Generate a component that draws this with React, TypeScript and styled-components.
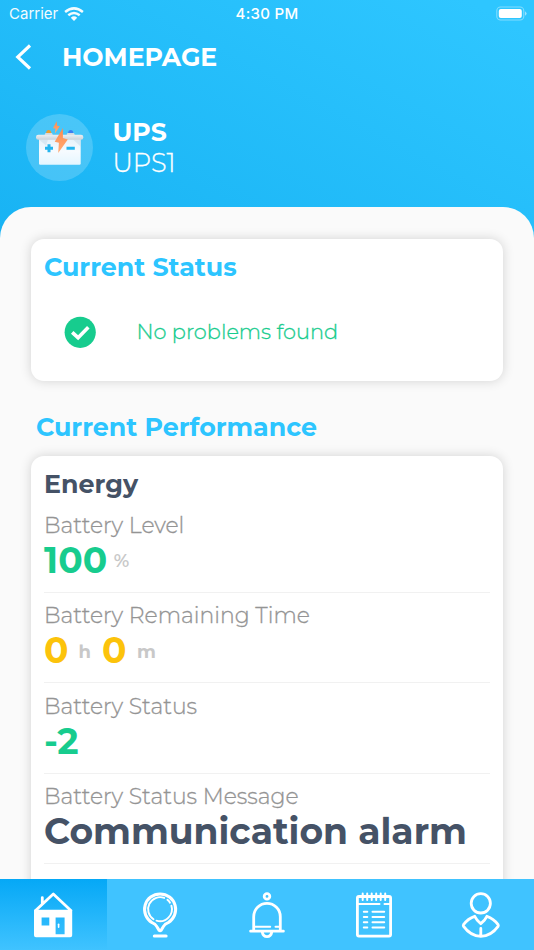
import React from 'react';
import styled, { createGlobalStyle } from 'styled-components';

const GlobalStyle = createGlobalStyle`
  * { box-sizing: border-box; }
  body { margin: 0; }
`;

const Screen = styled.div`
  display: flex;
  flex-direction: column;
  height: 950px;
  overflow: hidden;
  font-family: Montserrat, Inter, sans-serif;
  white-space: nowrap;
  background: linear-gradient(28deg, #17b2f3 0, #2ec6ff 450px) 0 0 / 100% 260px no-repeat;
`;

const StatusBar = styled.div`
  display: grid;
  grid-template-columns: 1fr auto 1fr;
  align-items: center;
  height: 27px;
  flex: none;
  padding: 0 7px 0 9px;
  color: #fff;
  font-family: Inter, sans-serif;
  font-size: 15px;
`;

const Carrier = styled.div`
  display: flex;
  align-items: center;
  gap: 6px;
  opacity: 0.95;
`;

const Clock = styled.div`
  font-weight: 500;
  letter-spacing: 0.3px;
  padding-right: 2px;
`;

const BatteryIcon = styled.svg`
  justify-self: end;
`;

const TitleBar = styled.header`
  display: flex;
  align-items: center;
  height: 60px;
  flex: none;
  padding-left: 14px;
  gap: 28px;
  color: #fff;
`;

const PageTitle = styled.h1`
  margin: 0;
  padding-bottom: 1px;
  font-size: 25.2px;
  line-height: 30px;
  font-weight: 700;
`;

const Device = styled.section`
  display: flex;
  align-items: center;
  flex: none;
  gap: 19.5px;
  height: 120px;
  padding: 27px 26px 26px;
  color: #fff;
`;

const DeviceText = styled.div<{ $bold?: boolean }>`
  font-size: ${p => (p.$bold ? 25.2 : 25.6)}px;
  line-height: ${p => (p.$bold ? 30 : 32)}px;
  font-weight: ${p => (p.$bold ? 700 : 300)};
  -webkit-text-stroke: ${p => (p.$bold ? 0 : 0.3)}px;
`;

const Sheet = styled.main`
  flex: 1;
  min-height: 0;
  overflow: hidden;
  padding: 32px 31px 0;
  border-radius: 31px 31px 0 0;
  background: #fafafa;
`;

const Card = styled.section<{ $height: number }>`
  height: ${p => p.$height}px;
  padding: 13px 13px 0;
  border-radius: 13px;
  background: #fff;
  box-shadow: 0 0 12px rgba(0, 0, 0, 0.16);
`;

const Heading = styled.h2<{ $dark?: boolean }>`
  margin: 0;
  font-size: 25.3px;
  line-height: 30px;
  font-weight: 700;
  color: ${p => (p.$dark ? '#455266' : '#2dc5ff')};
`;

const SectionHeader = styled.div`
  padding: 31px 0 14px 5px;
`;

const StatusRow = styled.div`
  display: flex;
  align-items: center;
  height: 60px;
  margin-top: 20px;
  padding-left: 20px;
  gap: 39.5px;
`;

const StatusText = styled.div`
  padding-bottom: 2px;
  color: #17cc8e;
  font-size: 20.9px;
  font-weight: 300;
  -webkit-text-stroke: 0.3px;
`;

const Metrics = styled.div`
  padding-top: 3.6px;
`;

const Metric = styled.div`
  padding: 9.4px 0 10.93px;
  border-bottom: 1px solid #f1f1f1;
`;

const MetricLabel = styled.div`
  height: 27px;
  color: #949494;
  font-size: 21.95px;
  line-height: 28px;
  font-weight: 300;
  -webkit-text-stroke: 0.3px;
`;

const MetricValue = styled.div`
  display: flex;
  align-items: center;
  height: 42px;
`;

const Figure = styled.span<{ $color: string }>`
  color: ${p => p.$color};
  font-size: 36.1px;
  line-height: 42px;
  font-weight: 700;
`;

const Unit = styled.span<{ $bold?: boolean; $before: number; $after?: number }>`
  padding: 3px ${p => p.$after ?? 0}px 0 ${p => p.$before}px;
  color: #c8c8c8;
  font-size: 18px;
  font-weight: ${p => (p.$bold ? 700 : 600)};
`;

const TabBar = styled.nav`
  display: grid;
  grid-template-columns: repeat(5, 1fr);
  flex: none;
  height: 71px;
  background: #40c3ff;
`;

const Tab = styled.a<{ $active?: boolean }>`
  display: flex;
  align-items: center;
  justify-content: center;
  background: ${p => (p.$active ? 'linear-gradient(#05a8f6, #40c3ff)' : 'none')};
`;

const TabIcon = styled.svg.attrs({ width: 40, height: 46, viewBox: '0 0 40 46' })`
  fill: none;
  stroke: #fff;
  stroke-width: 2.8;
  stroke-linecap: round;
  stroke-linejoin: round;
`;

const DeviceArt = () => (
  <svg width="67" height="67" viewBox="0 0 67 67">
    <defs>
      <linearGradient id="caseFill" x2="0" y2="1">
        <stop stopColor="#e5f1fa" />
        <stop offset="0.5" stopColor="#f6fbff" />
        <stop offset="1" stopColor="#e5f6ff" />
      </linearGradient>
      <linearGradient id="lidFill" x2="0" y2="1">
        <stop stopColor="#eceff2" />
        <stop offset="1" stopColor="#cbd3da" />
      </linearGradient>
      <linearGradient id="boltFill" x2="0" y2="1">
        <stop stopColor="#ff8a4c" />
        <stop offset="1" stopColor="#ffad78" />
      </linearGradient>
    </defs>
    <circle cx="33.5" cy="33.5" r="33.5" fill="#fff" fillOpacity="0.19" />
    <path d="M13 24h41.7v25.5q0 1.2-1.2 1.2H14.2q-1.2 0-1.2-1.2z" fill="url(#caseFill)" />
    <path d="M13 25.5h9l-2 6z M47 25.5h7.7v7z" fill="#c8dce9" fillOpacity="0.5" />
    <path d="M20 19.2q.4-3.2 2.7-3.2t2.7 3.2z" fill="#ee9d2e" />
    <path d="M42 19.2q.4-3.2 2.7-3.2t2.7 3.2z" fill="#3e7df0" />
    <path d="M18.6 21l.8-2.1h6.6l.8 2.1z M40.6 21l.8-2.1H48l.8 2.1z" fill="#d3dae0" />
    <rect x="10" y="20.7" width="47.3" height="5" rx="2.3" fill="url(#lidFill)" />
    <path d="M19 34.3h8M23 30.3v8M40.5 34.3h8.3" stroke="#24b5ef" strokeWidth="3" />
    <path d="M30.6 7.2l-3.6 7 2.5.3-.6 4.9 4.9-7.2-2.7-.5z" fill="url(#boltFill)" />
    <path d="M36.9 14L28.7 27.8l4.2.9-.7 10.3 9.6-13.6-4.9-1.5z" fill="url(#boltFill)" />
  </svg>
);

const metrics = [
  { label: 'Battery Level', value: <><Figure $color="#17cc8e">100</Figure><Unit $before={6.5}>%</Unit></> },
  {
    label: 'Battery Remaining Time',
    value: <>
      <Figure $color="#fcc30b">0</Figure><Unit $bold $before={10} $after={11}>h</Unit>
      <Figure $color="#fcc30b">0</Figure><Unit $bold $before={10.5}>m</Unit>
    </>,
  },
  { label: 'Battery Status', value: <Figure $color="#17cc8e">-2</Figure> },
  { label: 'Battery Status Message', value: <Figure $color="#455266">Communication alarm</Figure> },
];

export default function App() {
  return (
    <Screen>
      <GlobalStyle />
      <StatusBar>
        <Carrier>
          Carrier
          <svg width="20" height="14" viewBox="0 0 20 14" fill="none" stroke="#fff" strokeWidth="2.5">
            <path d="M1.1 4.9Q10-2.2 18.9 4.9M4.3 8.3Q10 3.7 15.7 8.3" />
            <path d="M6.8 10.7Q10 8 13.2 10.7L10 13.9z" fill="#fff" stroke="none" />
          </svg>
        </Carrier>
        <Clock>4:30 PM</Clock>
        <BatteryIcon width="31" height="15" viewBox="0 0 31 15" fill="none">
          <rect x="0.8" y="1" width="27" height="13" rx="3.8" stroke="#fff" strokeOpacity="0.4" strokeWidth="1.1" />
          <rect x="2.8" y="3" width="23" height="9" rx="2" fill="#fff" />
          <path d="M29 5.2q3.2 2.3 0 4.6z" fill="#fff" fillOpacity="0.5" />
        </BatteryIcon>
      </StatusBar>
      <TitleBar>
        <svg width="20" height="28" viewBox="0 0 20 28" fill="none" stroke="#fff" strokeWidth="3.1">
          <path d="M16 2.5L3.7 14 16 25.5" />
        </svg>
        <PageTitle>HOMEPAGE</PageTitle>
      </TitleBar>
      <Device>
        <DeviceArt />
        <div>
          <DeviceText $bold>UPS</DeviceText>
          <DeviceText>UPS1</DeviceText>
        </div>
      </Device>
      <Sheet>
        <Card $height={142}>
          <Heading>Current Status</Heading>
          <StatusRow>
            <svg width="33" height="33" viewBox="0 0 33 33">
              <circle cx="16.2" cy="16.3" r="15.6" fill="#17cc8e" />
              <path d="M8.2 16.3l5.9 5.4L24.3 11.3" fill="none" stroke="#fff" strokeWidth="3.6" />
            </svg>
            <StatusText>No problems found</StatusText>
          </StatusRow>
        </Card>
        <SectionHeader>
          <Heading>Current Performance</Heading>
        </SectionHeader>
        <Card $height={520}>
          <Heading $dark>Energy</Heading>
          <Metrics>
            {metrics.map(m => (
              <Metric key={m.label}>
                <MetricLabel>{m.label}</MetricLabel>
                <MetricValue>{m.value}</MetricValue>
              </Metric>
            ))}
          </Metrics>
        </Card>
      </Sheet>
      <TabBar>
        <Tab $active>
          <TabIcon>
            <path d="M2.6 18.5L20.3 2 37.8 18.5M9.3 11.5V5.6" />
            <path d="M1 17.8h38.2v25.4q0 2-2 2H3q-2 0-2-2zM8.6 25.5v8h7.7v-8zM22.6 25.5v16.7h9V25.5z" fill="#fff" fillRule="evenodd" stroke="none" />
            <path d="M25.6 32.3v3" strokeWidth="1.6" />
          </TabIcon>
        </Tab>
        <Tab>
          <TabIcon>
            <path d="M20.1 1.9a15.5 15.5 0 0 0-8 28.8q3.7 1.3 5 4.2l1.8 3.2q1.2 1.2 2.4 0l1.8-3.2q1.3-2.9 5-4.2a15.5 15.5 0 0 0-8-28.8z" strokeWidth="3" />
            <path d="M24.2 5.9A12 12 0 0 0 13.5 27.2M16.5 28.6A12 12 0 0 0 31.4 13.6M27.4 7.8Q29.2 9.2 30 10.7" strokeWidth="1.9" />
            <path d="M14.3 43.9h11.8" strokeWidth="3" />
          </TabIcon>
        </Tab>
        <Tab>
          <TabIcon>
            <circle cx="20" cy="4.4" r="2.8" />
            <path d="M6.7 38.5V24.7a13.3 13.3 0 0 1 26.6 0v13.8M3.6 39.2h32.8M15.2 40q.8 4.6 4.8 4.6t4.8-4.6" />
            <path d="M8 34.7h15.2M28.5 34.7h4" strokeWidth="2" />
          </TabIcon>
        </Tab>
        <Tab>
          <TabIcon>
            <rect x="3.4" y="4.5" width="33.2" height="39.6" rx="1.5" />
            <path d="M8.7 1.5v6.5M13.2 1.5v6.5M17.7 1.5v6.5M22.2 1.5v6.5M26.7 1.5v6.5M31.2 1.5v6.5" strokeWidth="2" />
            <path d="M4 12h21.5M30.5 12h6" strokeWidth="2" />
            <path d="M9.8 19.8h3.5M18.5 19.8h11.7M9.8 25h3.5M18.5 25h11.7M9.8 30.3h3.5M18.5 30.3h11.7M9.8 35.5h3.5M18.5 35.5h11.7" strokeWidth="2" />
          </TabIcon>
        </Tab>
        <Tab>
          <TabIcon>
            <ellipse cx="19.8" cy="11.3" rx="9.6" ry="9.7" />
            <path d="M13.7 24.3Q7 26.5 2.5 32.6 2 33.5 2.6 34.4 9.5 44 19.8 44.4 30.2 44 37.1 34.4 37.6 33.5 37.1 32.6 32.7 26.5 25.9 24.3 24.5 27.8 19.8 31.7 15.2 27.8 13.7 24.3zM19.8 36.5v7.5" />
          </TabIcon>
        </Tab>
      </TabBar>
    </Screen>
  );
}
